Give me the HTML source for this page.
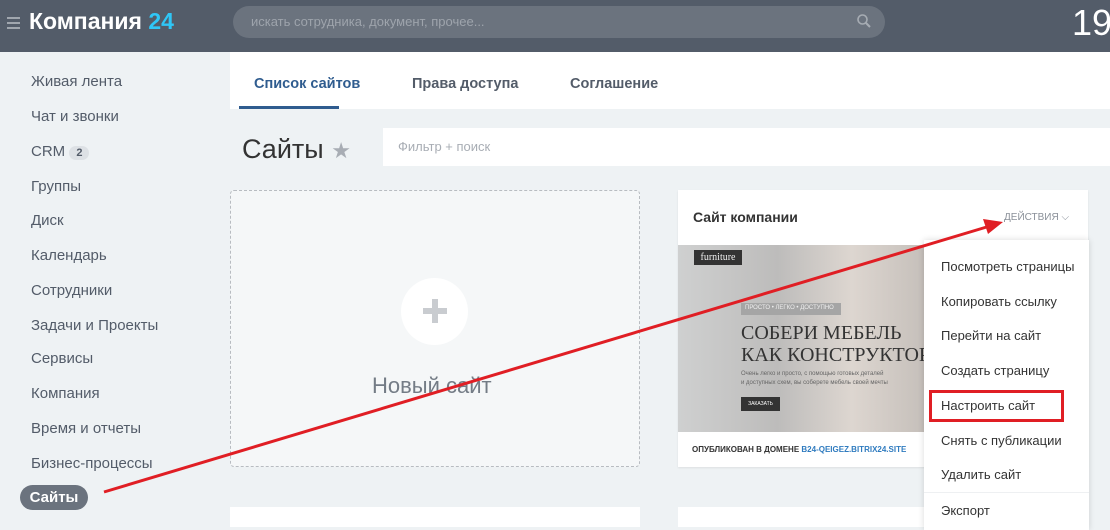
<!DOCTYPE html>
<html><head><meta charset="utf-8"><style>
*{margin:0;padding:0;box-sizing:border-box}
body{width:1110px;height:518px;overflow:hidden;background:#eef2f4;font-family:"Liberation Sans","DejaVu Sans",sans-serif;position:relative}
.hdr{position:absolute;left:0;top:0;width:1110px;height:52px;background:#535c69}
.abs{position:absolute}
.nav div{position:absolute;left:31px;font-size:15px;color:#535c69}
.menu div{position:absolute;left:941px;font-size:13px;color:#333}
</style></head><body>
<div class="hdr">
 <div class="abs" style="left:7px;top:17px;width:13px;height:2px;background:#a0a6ae;box-shadow:0 5px 0 #a0a6ae,0 10px 0 #a0a6ae"></div>
 <div class="abs" style="left:29px;top:8px;font-size:23px;font-weight:bold;color:#fff">Компания <span style="color:#2fc6f6">24</span></div>
 <div class="abs" style="left:233px;top:6px;width:652px;height:32px;border-radius:16px;background:#6b737e"></div>
 <div class="abs" style="left:251px;top:14px;font-size:13px;color:#9ea4ac">искать сотрудника, документ, прочее...</div>
 <svg class="abs" style="left:856px;top:13px" width="16" height="16"><circle cx="6.5" cy="6.5" r="4.5" stroke="#a6acb3" stroke-width="1.6" fill="none"/><path d="M10 10l4 4" stroke="#a6acb3" stroke-width="2"/></svg>
 <div class="abs" style="left:1072px;top:2px;font-size:36px;color:#fff;font-weight:300">19</div>
</div>
<div class="nav">
 <div style="top:73px">Живая лента</div><div style="top:108px">Чат и звонки</div>
 <div style="top:143px">CRM <span style="display:inline-block;background:#dde1e5;border-radius:9px;font-size:11px;padding:1px 7px;color:#535c69;font-weight:bold">2</span></div>
 <div style="top:178px">Группы</div><div style="top:212px">Диск</div><div style="top:247px">Календарь</div>
 <div style="top:282px">Сотрудники</div><div style="top:317px">Задачи и Проекты</div><div style="top:350px">Сервисы</div>
 <div style="top:385px">Компания</div><div style="top:420px">Время и отчеты</div><div style="top:455px">Бизнес-процессы</div>
</div>
<div class="abs" style="left:20px;top:485px;width:68px;height:25px;border-radius:13px;background:#6b737e;color:#fff;font-weight:bold;font-size:15px;text-align:center;line-height:25px">Сайты</div>
<div class="abs" style="left:230px;top:52px;width:880px;height:57px;background:#fff"></div>
<div class="abs" style="left:254px;top:76px;font-size:14.5px;font-weight:bold;color:#2f5c8f">Список сайтов</div>
<div class="abs" style="left:239px;top:106px;width:100px;height:3px;background:#2f5c8f"></div>
<div class="abs" style="left:412px;top:76px;font-size:14.5px;font-weight:bold;color:#535c69">Права доступа</div>
<div class="abs" style="left:570px;top:76px;font-size:14.5px;font-weight:bold;color:#535c69">Соглашение</div>
<div class="abs" style="left:242px;top:134px;font-size:27px;color:#333">Сайты <span style="color:#a8adb4;font-size:22px">★</span></div>
<div class="abs" style="left:383px;top:128px;width:727px;height:38px;background:#fff"></div>
<div class="abs" style="left:398px;top:139px;font-size:13px;color:#a8adb4">Фильтр + поиск</div>
<div class="abs" style="left:230px;top:190px;width:410px;height:277px;border:1px dashed #b8bcc1;border-radius:4px;background:#f5f7f8"></div>
<div class="abs" style="left:401px;top:278px;width:67px;height:67px;border-radius:50%;background:#fff"></div>
<div class="abs" style="left:423px;top:308px;width:24px;height:6px;background:#c9ccd0"></div>
<div class="abs" style="left:432px;top:299px;width:6px;height:24px;background:#c9ccd0"></div>
<div class="abs" style="left:372px;top:373px;font-size:22px;color:#747c86">Новый сайт</div>
<div class="abs" style="left:230px;top:507px;width:410px;height:20px;background:#fff"></div>
<div class="abs" style="left:678px;top:507px;width:410px;height:20px;background:#fff"></div>
<div class="abs" style="left:678px;top:190px;width:410px;height:277px;background:#fff;box-shadow:0 1px 2px rgba(0,0,0,.08)"></div>
<div class="abs" style="left:693px;top:209px;font-size:14px;font-weight:bold;color:#333">Сайт компании</div>
<div class="abs" style="left:1004px;top:212px;font-size:10px;color:#8a9099">ДЕЙСТВИЯ ⌵</div>
<div class="abs" style="left:678px;top:245px;width:248px;height:187px;background:linear-gradient(90deg,#cfd0d0,#bdbcbb 40%,#ddd6d0 70%,#c5bfba)"></div>
<div class="abs" style="left:694px;top:250px;width:48px;height:15px;background:#333;color:#eee;font-family:'Liberation Serif',serif;font-size:10px;line-height:15px;text-align:center">furniture</div>
<div class="abs" style="left:741px;top:303px;width:100px;height:12px;background:#a5a5a5;font-size:6px;color:#eee;padding:2px 4px">ПРОСТО • ЛЕГКО • ДОСТУПНО</div>
<div class="abs" style="left:741px;top:322px;font-family:'Liberation Serif',serif;font-size:20px;line-height:22px;color:#333">СОБЕРИ МЕБЕЛЬ<br>КАК КОНСТРУКТОР</div>
<div class="abs" style="left:741px;top:370px;font-size:6px;line-height:9px;color:#666">Очень легко и просто, с помощью готовых деталей<br>и доступных схем, вы соберете мебель своей мечты</div>
<div class="abs" style="left:741px;top:397px;width:39px;height:14px;background:#333;font-size:5px;color:#fff;text-align:center;line-height:14px">ЗАКАЗАТЬ</div>
<div class="abs" style="left:692px;top:445px;font-size:8px;font-weight:bold;color:#333">ОПУБЛИКОВАН В ДОМЕНЕ <span style="color:#2f7bbf">B24-QEIGEZ.BITRIX24.SITE</span></div>
<div class="abs" style="left:924px;top:240px;width:165px;height:290px;background:#fff;box-shadow:0 0 6px rgba(0,0,0,.15)"></div>
<div class="abs" style="left:924px;top:492px;width:165px;height:1px;background:#eef0f2"></div>
<div class="menu">
 <div style="top:259px">Посмотреть страницы</div><div style="top:294px">Копировать ссылку</div><div style="top:328px">Перейти на сайт</div>
 <div style="top:363px">Создать страницу</div><div style="top:398px">Настроить сайт</div><div style="top:433px">Снять с публикации</div>
 <div style="top:467px">Удалить сайт</div><div style="top:503px">Экспорт</div>
</div>
<div class="abs" style="left:929px;top:390px;width:135px;height:32px;border:3px solid #e01e24"></div>
<svg class="abs" style="left:0;top:0" width="1110" height="518"><path d="M104 492L990 226" stroke="#e01e24" stroke-width="3"/><path d="M1003 222L983 219L988 234Z" fill="#e01e24"/></svg>
</body></html>
